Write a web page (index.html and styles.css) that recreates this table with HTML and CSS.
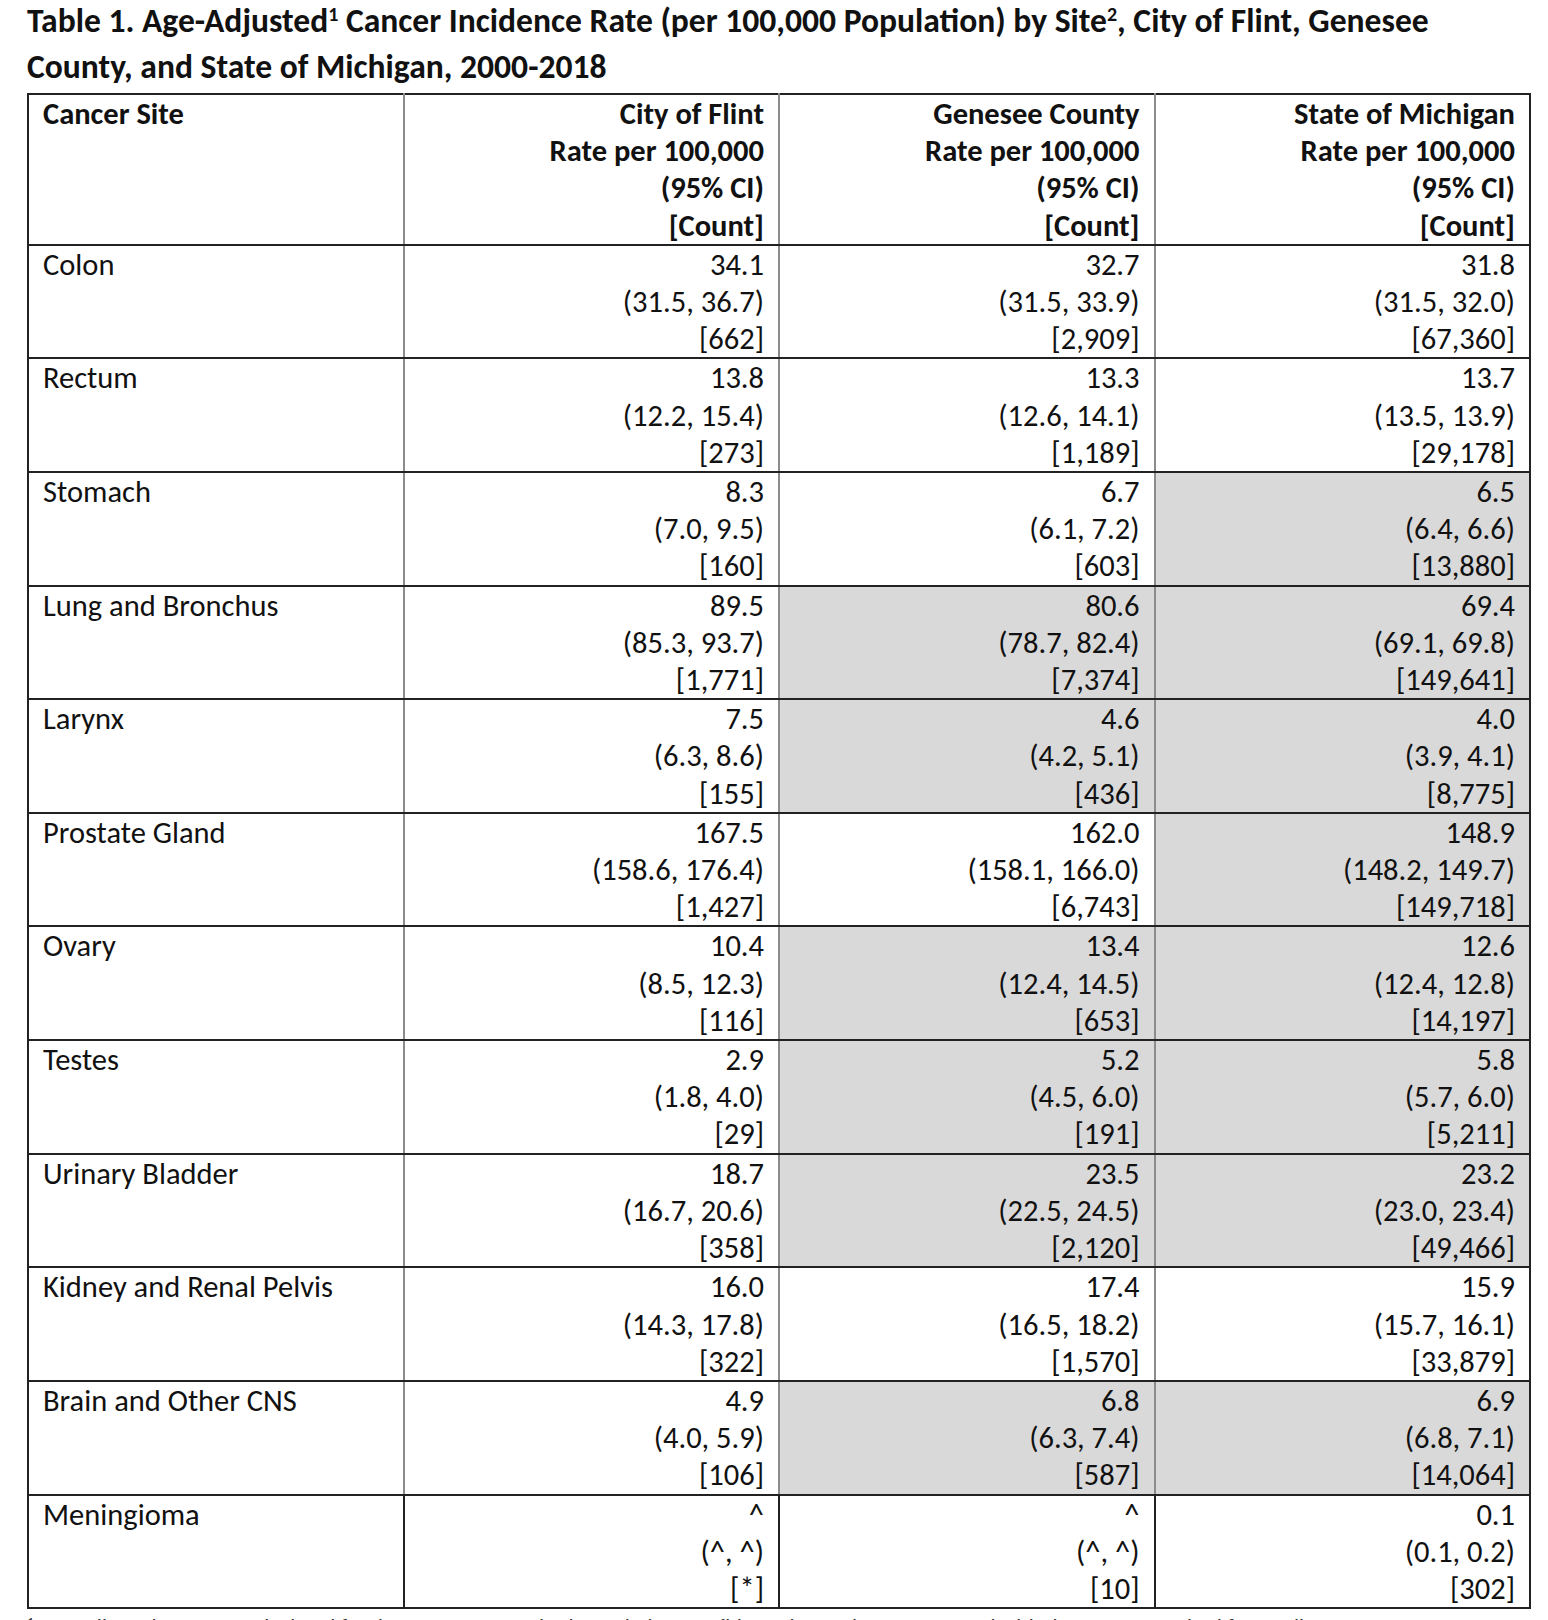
FILE: index.html
```html
<!DOCTYPE html>
<html lang="en">
<head>
<meta charset="utf-8">
<title>Table 1. Age-Adjusted Cancer Incidence Rate</title>
<link rel="stylesheet" href="styles.css">
</head>
<body>
<div class="page">
  <h1 class="title">Table 1. Age-Adjusted<sup>1</sup> Cancer Incidence Rate (per 100,000 Population) by Site<sup>2</sup>, City of Flint, Genesee<br>County, and State of Michigan, 2000-2018</h1>
  <table class="rates">
    <colgroup><col class="c"><col class="c"><col class="c"><col class="c"></colgroup>
    <thead>
      <tr>
        <th class="site">Cancer Site</th>
        <th class="num"><span class="ln">City of Flint</span><span class="ln">Rate per 100,000</span><span class="ln">(95% CI)</span><span class="ln">[Count]</span></th>
        <th class="num"><span class="ln">Genesee County</span><span class="ln">Rate per 100,000</span><span class="ln">(95% CI)</span><span class="ln">[Count]</span></th>
        <th class="num"><span class="ln">State of Michigan</span><span class="ln">Rate per 100,000</span><span class="ln">(95% CI)</span><span class="ln">[Count]</span></th>
      </tr>
    </thead>
    <tbody>
      <tr>
        <td class="site">Colon</td>
        <td class="num"><span class="ln">34.1</span><span class="ln">(31.5, 36.7)</span><span class="ln">[662]</span></td>
        <td class="num"><span class="ln">32.7</span><span class="ln">(31.5, 33.9)</span><span class="ln">[2,909]</span></td>
        <td class="num"><span class="ln">31.8</span><span class="ln">(31.5, 32.0)</span><span class="ln">[67,360]</span></td>
      </tr>
      <tr>
        <td class="site">Rectum</td>
        <td class="num"><span class="ln">13.8</span><span class="ln">(12.2, 15.4)</span><span class="ln">[273]</span></td>
        <td class="num"><span class="ln">13.3</span><span class="ln">(12.6, 14.1)</span><span class="ln">[1,189]</span></td>
        <td class="num"><span class="ln">13.7</span><span class="ln">(13.5, 13.9)</span><span class="ln">[29,178]</span></td>
      </tr>
      <tr>
        <td class="site">Stomach</td>
        <td class="num"><span class="ln">8.3</span><span class="ln">(7.0, 9.5)</span><span class="ln">[160]</span></td>
        <td class="num"><span class="ln">6.7</span><span class="ln">(6.1, 7.2)</span><span class="ln">[603]</span></td>
        <td class="num shade"><span class="ln">6.5</span><span class="ln">(6.4, 6.6)</span><span class="ln">[13,880]</span></td>
      </tr>
      <tr>
        <td class="site">Lung and Bronchus</td>
        <td class="num"><span class="ln">89.5</span><span class="ln">(85.3, 93.7)</span><span class="ln">[1,771]</span></td>
        <td class="num shade"><span class="ln">80.6</span><span class="ln">(78.7, 82.4)</span><span class="ln">[7,374]</span></td>
        <td class="num shade"><span class="ln">69.4</span><span class="ln">(69.1, 69.8)</span><span class="ln">[149,641]</span></td>
      </tr>
      <tr>
        <td class="site">Larynx</td>
        <td class="num"><span class="ln">7.5</span><span class="ln">(6.3, 8.6)</span><span class="ln">[155]</span></td>
        <td class="num shade"><span class="ln">4.6</span><span class="ln">(4.2, 5.1)</span><span class="ln">[436]</span></td>
        <td class="num shade"><span class="ln">4.0</span><span class="ln">(3.9, 4.1)</span><span class="ln">[8,775]</span></td>
      </tr>
      <tr>
        <td class="site">Prostate Gland</td>
        <td class="num"><span class="ln">167.5</span><span class="ln">(158.6, 176.4)</span><span class="ln">[1,427]</span></td>
        <td class="num"><span class="ln">162.0</span><span class="ln">(158.1, 166.0)</span><span class="ln">[6,743]</span></td>
        <td class="num shade"><span class="ln">148.9</span><span class="ln">(148.2, 149.7)</span><span class="ln">[149,718]</span></td>
      </tr>
      <tr>
        <td class="site">Ovary</td>
        <td class="num"><span class="ln">10.4</span><span class="ln">(8.5, 12.3)</span><span class="ln">[116]</span></td>
        <td class="num shade"><span class="ln">13.4</span><span class="ln">(12.4, 14.5)</span><span class="ln">[653]</span></td>
        <td class="num shade"><span class="ln">12.6</span><span class="ln">(12.4, 12.8)</span><span class="ln">[14,197]</span></td>
      </tr>
      <tr>
        <td class="site">Testes</td>
        <td class="num"><span class="ln">2.9</span><span class="ln">(1.8, 4.0)</span><span class="ln">[29]</span></td>
        <td class="num shade"><span class="ln">5.2</span><span class="ln">(4.5, 6.0)</span><span class="ln">[191]</span></td>
        <td class="num shade"><span class="ln">5.8</span><span class="ln">(5.7, 6.0)</span><span class="ln">[5,211]</span></td>
      </tr>
      <tr>
        <td class="site">Urinary Bladder</td>
        <td class="num"><span class="ln">18.7</span><span class="ln">(16.7, 20.6)</span><span class="ln">[358]</span></td>
        <td class="num shade"><span class="ln">23.5</span><span class="ln">(22.5, 24.5)</span><span class="ln">[2,120]</span></td>
        <td class="num shade"><span class="ln">23.2</span><span class="ln">(23.0, 23.4)</span><span class="ln">[49,466]</span></td>
      </tr>
      <tr>
        <td class="site">Kidney and Renal Pelvis</td>
        <td class="num"><span class="ln">16.0</span><span class="ln">(14.3, 17.8)</span><span class="ln">[322]</span></td>
        <td class="num"><span class="ln">17.4</span><span class="ln">(16.5, 18.2)</span><span class="ln">[1,570]</span></td>
        <td class="num"><span class="ln">15.9</span><span class="ln">(15.7, 16.1)</span><span class="ln">[33,879]</span></td>
      </tr>
      <tr>
        <td class="site">Brain and Other CNS</td>
        <td class="num"><span class="ln">4.9</span><span class="ln">(4.0, 5.9)</span><span class="ln">[106]</span></td>
        <td class="num shade"><span class="ln">6.8</span><span class="ln">(6.3, 7.4)</span><span class="ln">[587]</span></td>
        <td class="num shade"><span class="ln">6.9</span><span class="ln">(6.8, 7.1)</span><span class="ln">[14,064]</span></td>
      </tr>
      <tr class="last">
        <td class="site">Meningioma</td>
        <td class="num"><span class="ln">^</span><span class="ln">(^, ^)</span><span class="ln">[*]</span></td>
        <td class="num"><span class="ln">^</span><span class="ln">(^, ^)</span><span class="ln">[10]</span></td>
        <td class="num"><span class="ln">0.1</span><span class="ln">(0.1, 0.2)</span><span class="ln">[302]</span></td>
      </tr>
    </tbody>
  </table>
  <p class="note"><sup>1</sup> Age-adjusted rates are calculated for the 2000 U.S. standard population; confidence intervals are computed with the gamma method for small counts.</p>
</div>
</body>
</html>
```

FILE: styles.css
```css
html, body {
  margin: 0;
  padding: 0;
  background: #ffffff;
}

body {
  font-family: Carlito, Lato, "Liberation Sans", sans-serif;
  color: #111111;
}

.page {
  padding: 0 0 0 27px;
}

.title {
  margin: -2px 0 0 0;
  font-size: 33.6px;
  font-weight: 700;
  line-height: 46px;
  color: #111111;
}

.title sup {
  font-size: 20px;
  line-height: 0;
  vertical-align: 11px;
}

.rates {
  border-collapse: collapse;
  table-layout: fixed;
  width: 1504px;
  margin-top: 3px;
  border: 2px solid #222222;
  font-size: 30.5px;
  line-height: 37.2px;
}

.rates col.c {
  width: 25%;
}

.rates th,
.rates td {
  padding: 0 14px 0 14px;
  vertical-align: top;
  border-top: 2px solid #222222;
  border-bottom: 2px solid #222222;
  border-left: 2px solid #8c8c8c;
  border-right: 2px solid #8c8c8c;
}

.rates th {
  font-weight: 700;
}

.rates .site {
  text-align: left;
}

.rates .num {
  text-align: right;
}

.rates .ln {
  display: block;
  white-space: nowrap;
}

.rates .shade {
  background: #d9d9d9;
}

.rates tr.last td {
  border-left-color: #222222;
  border-right-color: #222222;
}

.rates th:first-child,
.rates td:first-child {
  border-left-color: #222222;
}

.rates th:last-child,
.rates td:last-child {
  border-right-color: #222222;
}

.note {
  margin: 4px 0 0 0;
  font-size: 22px;
  line-height: 30px;
  color: #333333;
  white-space: nowrap;
}

.note sup {
  font-size: 14px;
  line-height: 0;
}
```
